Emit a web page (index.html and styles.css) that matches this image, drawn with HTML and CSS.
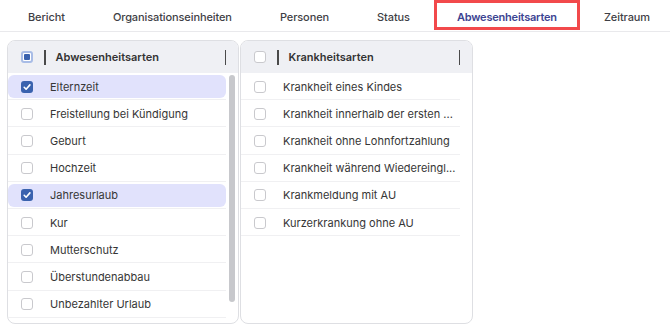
FILE: index.html
```html
<!DOCTYPE html>
<html lang="de">
<head>
<meta charset="utf-8">
<title>Abwesenheitsarten</title>
<link rel="stylesheet" href="styles.css">
</head>
<body>
<nav class="tabs">
  <div class="tab">Bericht</div>
  <div class="tab">Organisationseinheiten</div>
  <div class="tab">Personen</div>
  <div class="tab">Status</div>
  <div class="tab active">Abwesenheitsarten</div>
  <div class="tab">Zeitraum</div>
</nav>
<main class="panels">
  <section class="panel panel-left">
    <header class="panel-head">
      <span class="cb cb-partial"></span>
      <span class="bar"></span>
      <span class="head-title">Abwesenheitsarten</span>
      <span class="bar"></span>
    </header>
    <div class="body">
      <ul class="list">
        <li class="row"><div class="item selected"><span class="cb cb-checked"><svg viewBox="0 0 12 12"><path d="M3.2 6.3 5.1 8.2 8.9 3.9" /></svg></span><span class="label">Elternzeit</span></div></li>
        <li class="row"><div class="item"><span class="cb"></span><span class="label">Freistellung bei Kündigung</span></div></li>
        <li class="row"><div class="item"><span class="cb"></span><span class="label">Geburt</span></div></li>
        <li class="row"><div class="item"><span class="cb"></span><span class="label">Hochzeit</span></div></li>
        <li class="row"><div class="item selected"><span class="cb cb-checked"><svg viewBox="0 0 12 12"><path d="M3.2 6.3 5.1 8.2 8.9 3.9" /></svg></span><span class="label">Jahresurlaub</span></div></li>
        <li class="row"><div class="item"><span class="cb"></span><span class="label">Kur</span></div></li>
        <li class="row"><div class="item"><span class="cb"></span><span class="label">Mutterschutz</span></div></li>
        <li class="row"><div class="item"><span class="cb"></span><span class="label">Überstundenabbau</span></div></li>
        <li class="row"><div class="item"><span class="cb"></span><span class="label">Unbezahlter Urlaub</span></div></li>
      </ul>
      <div class="scroll"><div class="thumb"></div></div>
    </div>
  </section>
  <section class="panel panel-right">
    <header class="panel-head">
      <span class="cb"></span>
      <span class="bar"></span>
      <span class="head-title">Krankheitsarten</span>
      <span class="bar"></span>
    </header>
    <div class="body">
      <ul class="list">
        <li class="row"><div class="item"><span class="cb"></span><span class="label">Krankheit eines Kindes</span></div></li>
        <li class="row"><div class="item"><span class="cb"></span><span class="label">Krankheit innerhalb der ersten ...</span></div></li>
        <li class="row"><div class="item"><span class="cb"></span><span class="label">Krankheit ohne Lohnfortzahlung</span></div></li>
        <li class="row"><div class="item"><span class="cb"></span><span class="label">Krankheit während Wiedereingl...</span></div></li>
        <li class="row"><div class="item"><span class="cb"></span><span class="label">Krankmeldung mit AU</span></div></li>
        <li class="row"><div class="item"><span class="cb"></span><span class="label">Kurzerkrankung ohne AU</span></div></li>
      </ul>
      <div class="scroll"></div>
    </div>
  </section>
</main>
</body>
</html>
```
FILE: styles.css
```css
* { box-sizing: border-box; }
html, body { margin: 0; padding: 0; background: #fff; }
body {
  font-family: Inter, "Noto Sans", "Liberation Sans", sans-serif;
  font-size: 11px;
  color: #363636;
}

.tabs {
  display: flex;
  height: 32px;
  padding-left: 4px;
  border-bottom: 1px solid #e9e9ec;
}
.tab {
  display: flex;
  align-items: center;
  padding: 3px 24px 0;
  height: 30px;
  font-weight: 500;
  letter-spacing: -0.1px;
  color: #3f3f46;
  white-space: nowrap;
}
.tab.active {
  color: #3c4492;
  font-weight: 600;
  letter-spacing: -0.2px;
  padding: 3px 23px 0;
  outline: 3px solid #f2494b;
  outline-offset: -3px;
}

.panels {
  display: flex;
  gap: 1px;
  padding: 8px 0 0 7px;
}
.panel {
  display: flex;
  flex-direction: column;
  height: 284px;
  border: 1px solid #dedfe3;
  border-radius: 8px;
  overflow: hidden;
  background: #fff;
}
.panel-left { width: 232px; }
.panel-right { width: 233px; }

.panel-head {
  display: flex;
  align-items: center;
  flex: 0 0 32px;
  padding: 0 12px 0 13px;
  background: #eff0f4;
}
.bar {
  width: 1.5px;
  height: 15px;
  background: #4a4a4a;
}
.panel-head .cb { margin-right: 11px; }
.head-title {
  flex: 1;
  margin-left: 10px;
  font-weight: 600;
  color: #333;
}

.body {
  flex: 1;
  display: flex;
  min-height: 0;
  overflow: hidden;
}
.list {
  list-style: none;
  margin: 0;
  padding: 0;
  flex: 1;
  min-width: 0;
}
.scroll {
  flex: 0 0 12px;
  padding: 2px 3px;
}
.thumb {
  width: 6px;
  height: 227px;
  border-radius: 3px;
  background: #c7c8cc;
}

.row {
  height: 27.2px;
  padding: 2px 0 1px;
  border-bottom: 1px solid #f0f0f2;
}
.item {
  display: flex;
  align-items: center;
  height: 100%;
  padding-left: 13px;
  border-radius: 6px;
}
.item.selected { background: #e1e2fc; }
.label {
  margin-left: 17px;
  padding-right: 6px;
  white-space: nowrap;
  overflow: hidden;
}

.cb {
  flex: 0 0 12px;
  width: 12px;
  height: 12px;
  border: 1.5px solid #c9c9cd;
  border-radius: 3px;
  background: #fff;
  display: inline-flex;
  align-items: center;
  justify-content: center;
}
.cb-checked {
  border: none;
  background: #3a62ae;
}
.cb-checked svg { width: 12px; height: 12px; }
.cb-checked path {
  fill: none;
  stroke: #fff;
  stroke-width: 1.6;
  stroke-linecap: round;
  stroke-linejoin: round;
}
.cb-partial {
  border: 2px solid #a8bce6;
  background: #fff;
}
.cb-partial::before {
  content: "";
  width: 6px;
  height: 6px;
  border-radius: 1px;
  background: #3a62ae;
}
```
